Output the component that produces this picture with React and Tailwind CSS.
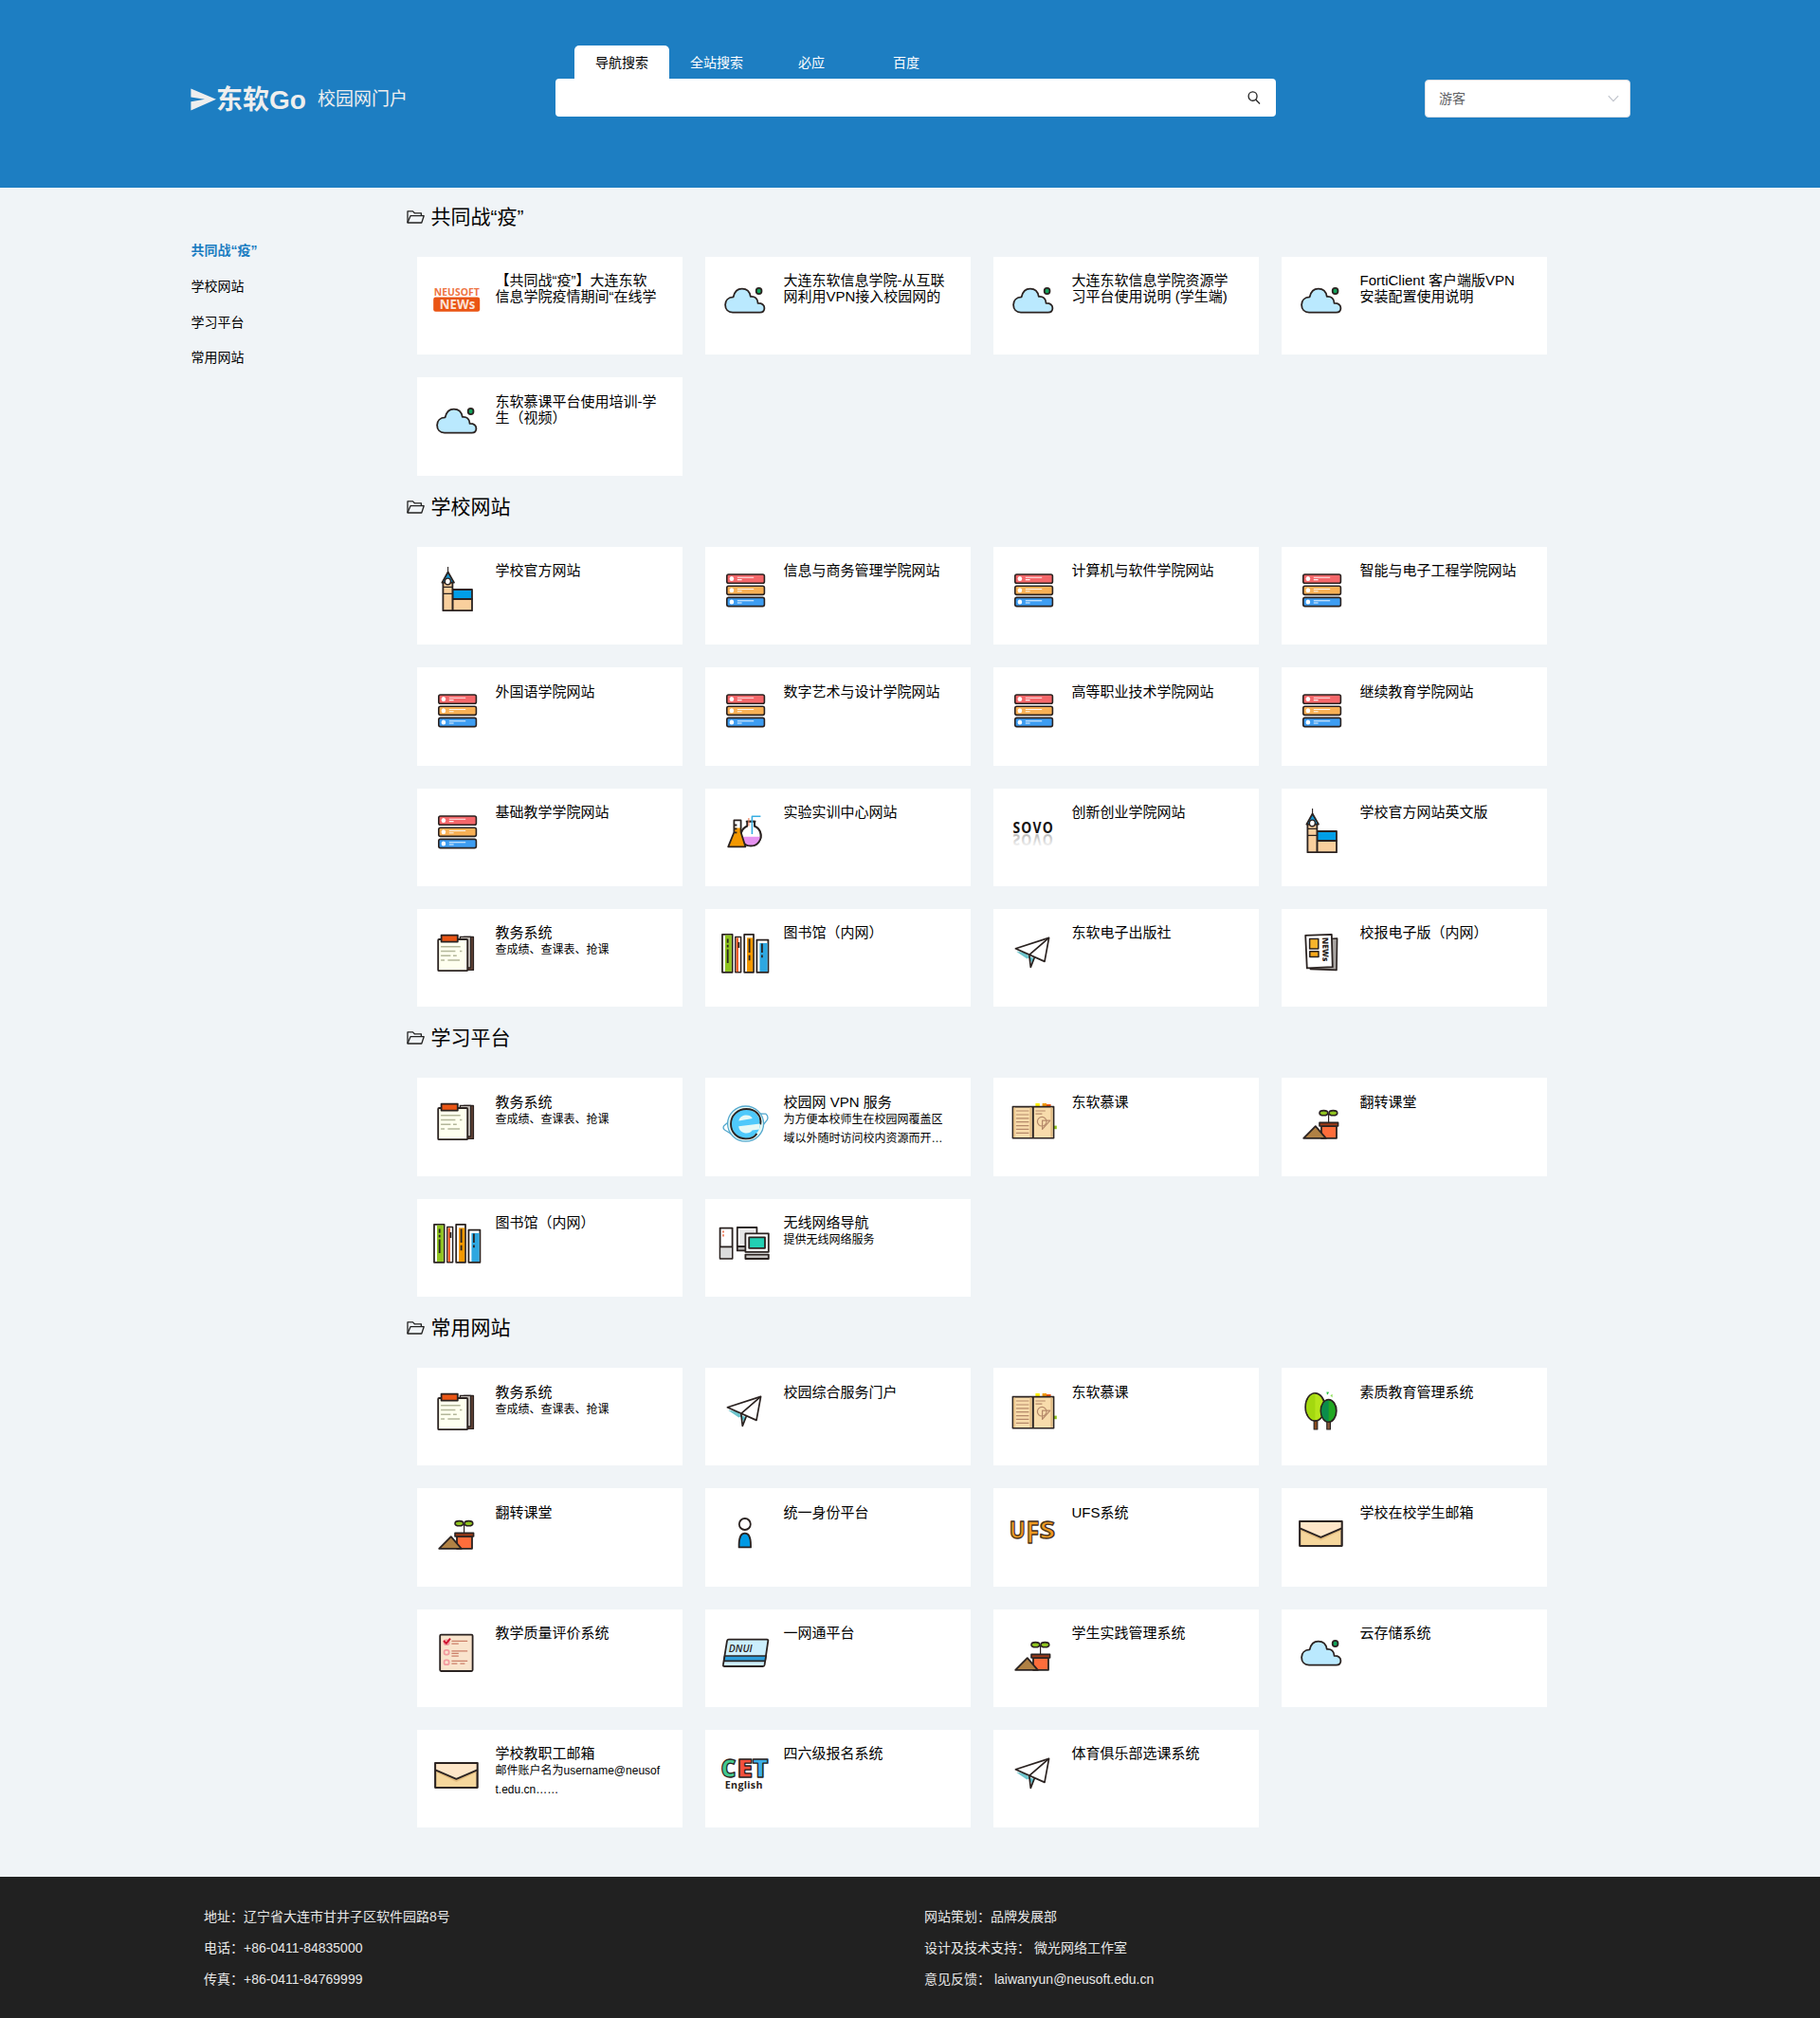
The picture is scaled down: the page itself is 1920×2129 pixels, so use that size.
import React from "react";

const INK = "#2b2321";

/* Every card icon is drawn on the same 64x64 board. */
function Board({ children }) {
  return (
    <svg
      className="block h-16 w-16 shrink-0"
      viewBox="10.6 10 64 64"
      fill="none"
      stroke={INK}
      strokeWidth="1.8"
      strokeLinejoin="round"
    >
      {children}
    </svg>
  );
}

const NewsLogo = () => (
  <Board>
    <g stroke="none" fontFamily="Open Sans, sans-serif">
      <text x="18.4" y="41" fontSize="10.2" fontWeight="700" fill="#ee7443" textLength="48" lengthAdjust="spacingAndGlyphs">NEUSOFT</text>
      <rect x="17.8" y="42.6" width="49" height="15.2" rx="2.4" fill="#ea5514" />
      <text x="24.4" y="55.2" fontSize="13.4" fontWeight="700" fill="#fbe3d8" textLength="37.4" lengthAdjust="spacingAndGlyphs">NEWs</text>
    </g>
  </Board>
);

const Cloud = () => (
  <Board>
    <path
      fill="#bae9fe"
      d="M29.6 58.6C24.5 58.6 21.7 55 21.7 50.6C21.7 46 25 42.6 30.2 42.4C31.4 37 34.6 33.7 39.4 33.7C44.2 33.7 47.6 37 48.4 41.9C53 41.4 56 44 56.2 48.9C60.6 48.8 63 50.8 63 53.9C63 56.8 61 58.6 58.2 58.6Z"
    />
    <ellipse cx="57.2" cy="36" rx="2.9" ry="3.1" fill="#13a35b" />
  </Board>
);

const Servers = () => (
  <Board>
    {[
      [29, "#f5676a"],
      [41.2, "#f8b055"],
      [53.4, "#3d9df2"],
    ].map(([y, fill]) => (
      <g key={y}>
        <rect x="23.4" y={y} width="39.6" height="9.2" rx="1.8" fill={fill} strokeWidth="1.6" />
        <ellipse cx="28.5" cy={y + 4.6} rx="2.3" ry="2.5" fill="#fff" stroke="none" />
        <path d={`M34.4 ${y + 3.3}H51.8M34.4 ${y + 5.6}H39.2`} stroke="#fff" strokeWidth="1.1" opacity=".9" />
      </g>
    ))}
  </Board>
);

const Tower = () => (
  <Board>
    <rect x="38" y="45" width="20.6" height="10" fill="#009ee7" />
    <rect x="38" y="55" width="20.6" height="12.2" fill="#f9cf9d" />
    <rect x="28" y="37" width="10" height="30.2" fill="#f9cf9d" />
    <path d="M28 42.4H38M28 49.4H38" strokeWidth="1.3" />
    <path d="M33.2 26.5L27 37.6H39.6Z" fill="#1597d4" />
    <path d="M33.2 21V27" strokeWidth="1.1" />
    <ellipse cx="33" cy="36.4" rx="3" ry="3.3" fill="#fff" strokeWidth="1.4" />
  </Board>
);

const Flasks = () => (
  <Board>
    <path d="M44.8 39.6A10.6 10.8 0 1 0 52.6 39.6V34.6H44.8Z" fill="#fff" />
    <path d="M39.2 50.7H59.2A10 10.4 0 0 1 39.2 50.7Z" fill="#e592f0" stroke="none" />
    <path d="M44.8 39.6A10.6 10.8 0 1 0 52.6 39.6V34.6M43.4 34.6H54" />
    <path d="M31 33.4H38.2V46L43 61.3H24.8L31 46Z" fill="#fff" stroke="none" />
    <path d="M31 41.5H38.2V46L43 61.3H24.8L31 46Z" fill="#f39800" stroke="none" />
    <path d="M31 33.4H38.2V46L43 61.3H24.8L31 46ZM31 38.5H34M31 42.4H34M31 46.4H34" />
    <path d="M59 29.3H50V48" stroke="#38aee2" strokeWidth="1.6" />
    <path d="M46.5 31V39.6" stroke="#ee7a55" strokeWidth="1.1" />
  </Board>
);

const Sovo = () => (
  <Board>
    <defs>
      <linearGradient id="sovoFade" x1="0" y1="0" x2="0" y2="1">
        <stop offset="0.2" stopColor="#f2f2f2" />
        <stop offset="0.8" stopColor="#b4b4b4" />
      </linearGradient>
    </defs>
    <g stroke="none" fontFamily="Open Sans, sans-serif" fontWeight="700" fontSize="16.2" letterSpacing="1.4">
      <text x="21" y="47.2" fill="#151313" textLength="43.6" lengthAdjust="spacingAndGlyphs">SOVO</text>
      <g transform="translate(0 94.8) scale(1 -1)">
        <text x="21" y="47.2" fill="url(#sovoFade)" textLength="43.6" lengthAdjust="spacingAndGlyphs">SOVO</text>
      </g>
    </g>
  </Board>
);

const Clipboard = () => (
  <Board>
    <path d="M50 29.4H60V64.4H50Z" fill="#6f4a3b" strokeWidth="1.4" />
    <path d="M46 29.4H57.2V62H46Z" fill="#c5bfb9" strokeWidth="1.4" />
    <rect x="22.8" y="32" width="31" height="33.2" rx="1" fill="#feffef" />
    <rect x="26.2" y="27.6" width="17.2" height="7" fill="#ea5514" />
    <path
      stroke="#b3b79a"
      strokeWidth="1.6"
      d="M25.7 39.8H46.3M25.7 44.5H41M45.6 44.5H48M25.7 49.3H36M38.6 49.3H42.4M25.7 54H29.6M33 54H45.6"
    />
  </Board>
);

const Books = () => (
  <Board>
    <rect x="18.6" y="26.8" width="10.6" height="40" fill="#fff" />
    <rect x="21.6" y="27.6" width="6.8" height="38.4" fill="#8fc31f" stroke="none" />
    <rect x="32.4" y="29.6" width="5.8" height="37.2" fill="#fff" strokeWidth="1.5" />
    <rect x="33.2" y="30.4" width="2.4" height="35.8" fill="#f0602a" stroke="none" />
    <rect x="41.8" y="26.8" width="9.8" height="40" fill="#fff" />
    <rect x="44.6" y="30.4" width="6.2" height="35.6" fill="#f39800" stroke="none" />
    <rect x="55" y="32.6" width="12" height="34.2" fill="#fff" />
    <rect x="58" y="36" width="8.2" height="30" fill="#2ea7e0" stroke="none" />
    <path strokeWidth="1.8" d="M24.3 31.6V35.8M24.3 37.7V40.4M24.3 42.6V57M36 35V41M47.2 31.6V46M47.2 48.7V54.3M60.5 36.6V46M60.5 48.6V51.2" />
  </Board>
);

const Plane = () => (
  <Board>
    <path d="M24.4 43.4L43 52L41.8 58L38 51.5Z" fill="#5cbfca" stroke="none" />
    <path d="M25 45L36 52.4L39 51L34 46Z" fill="#6cc4cc" stroke="none" />
    <path d="M24 41.8L59.2 30.4L54.6 55.4Z" fill="#fff" strokeWidth="1.7" />
    <path d="M59.2 30.4L38.4 48.4L39.9 61.4L44 51" strokeWidth="1.7" />
  </Board>
);

const Newspaper = () => (
  <Board>
    <path d="M31 33L59.2 31L58.6 64.4L31 63.4Z" fill="#a9a5a2" strokeWidth="1.6" />
    <path d="M25.8 27.8L53.4 26.8L54.4 61.2L27.4 62.4Z" fill="#fff" />
    <rect x="30.2" y="31.6" width="9.2" height="10.4" fill="#f7b42c" strokeWidth="1.5" />
    <rect x="30.4" y="44.8" width="9.2" height="5.6" fill="#f7a81b" strokeWidth="1.5" />
    <text
      transform="translate(43.6 30) rotate(89)"
      stroke="none"
      fill={INK}
      fontFamily="Open Sans, sans-serif"
      fontWeight="800"
      fontSize="8.6"
      textLength="25.4"
      lengthAdjust="spacingAndGlyphs"
    >
      NEWs
    </text>
  </Board>
);

const Browser = () => (
  <Board>
    <g stroke="#55a9ce" strokeWidth="1.3">
      <path d="M57 38L64.6 38.2Q67.6 40.6 66 44.4L60 52M27 45L20.6 50.4Q18.6 53 21 55L29 60" fill="#fff" />
      <ellipse cx="43.2" cy="48.6" rx="19" ry="18.6" fill="#e6f9f6" />
    </g>
    <ellipse cx="43" cy="48.6" rx="15.6" ry="15.4" fill="#4fc9fb" stroke="none" />
    <path d="M58.8 49.4C60.4 39.5 53.4 33 44 33C34.5 33 27.6 40 27.6 48.8C27.6 58 34.6 64.4 43.4 64.4C49 64.4 53 62.2 55 59" strokeWidth="1.9" />
    <path d="M36 45.4C37 38.8 48 37.6 50.4 43Z" fill="#e6f9f6" stroke="none" />
    <path d="M58.4 48.6L35.8 51.2C36.6 59.4 47.4 60.4 50.2 55.4L57.6 54.4Z" fill="#e6f9f6" stroke="none" />
  </Board>
);

const Computers = () => (
  <Board>
    <rect x="16.2" y="30.6" width="13" height="32.2" fill="#fff" />
    <rect x="17" y="50.6" width="11.4" height="11.6" fill="#dcdcdc" stroke="none" />
    <path d="M16.2 50.4H29.2" />
    <path d="M19.6 33.4V35.6M19.6 37.2V39.4" stroke="#e9552b" strokeWidth="1.4" />
    <rect x="34.4" y="50" width="10" height="4.4" fill="#b5b2b1" />
    <rect x="34.4" y="30" width="20.6" height="20" fill="#fff" />
    <rect x="36.8" y="32.4" width="15.8" height="15" fill="#e6e6e6" stroke="none" />
    <rect x="43" y="36.4" width="24.4" height="19.4" fill="#fff" />
    <rect x="46.8" y="40.4" width="16.8" height="11.4" fill="#22cfb3" />
    <rect x="43" y="58.6" width="24.4" height="4.4" fill="#c8c5c4" />
  </Board>
);

const OpenBook = () => (
  <Board>
    <rect x="45" y="27" width="4.4" height="3" fill="#fff100" stroke="none" />
    <rect x="52.2" y="27" width="4.4" height="3" fill="#f39800" stroke="none" />
    <rect x="56.6" y="28" width="4.6" height="2" fill="#ea5514" stroke="none" />
    <rect x="64.4" y="50.6" width="3" height="3.6" fill="#8fc31f" stroke="none" />
    <rect x="21" y="30.6" width="43.2" height="33.2" fill="#f8dcac" strokeWidth="1.6" />
    <path d="M39.8 31.4V63M61.8 31.4V63M22.6 31.4V63" stroke="#e3bd85" strokeWidth="1.8" />
    <path d="M42.4 30.6V63.8" strokeWidth="2" />
    <g stroke="#b5896a" strokeWidth="1.2">
      <path d="M24.5 35H38M24.5 39H38M24.5 42.8H38M24.5 46.7H38M24.5 50.6H38M24.5 54.4H38M24.5 58.4H38M45 35H55.4M45 38.2H52" />
      <circle cx="51.8" cy="46.2" r="4.8" />
      <path d="M52.2 45.2H60.4L52.2 54.4Z" />
    </g>
  </Board>
);

const Plant = () => (
  <Board>
    <path d="M50.2 47V38" strokeWidth="1.2" />
    <ellipse cx="45" cy="37.2" rx="4.4" ry="2.6" fill="#8fc31f" strokeWidth="1.6" />
    <ellipse cx="55" cy="37.2" rx="4.4" ry="2.6" fill="#8fc31f" strokeWidth="1.6" />
    <path d="M42.6 51H58.6V63.8H42.6Z" fill="#ff6d3b" />
    <rect x="40.6" y="47.4" width="19.6" height="3.6" fill="#9c3a17" strokeWidth="1.6" />
    <path d="M23.8 63.8L36.4 51.2L47.4 63.8Z" fill="#b08144" />
  </Board>
);

const Trees = () => (
  <Board>
    <rect x="34.8" y="55.4" width="3.6" height="9.6" fill="#8a4a1c" strokeWidth="1.2" />
    <rect x="48.4" y="56" width="3.6" height="9" fill="#8a5a3c" strokeWidth="1.2" />
    <ellipse cx="36" cy="41.4" rx="10.2" ry="14.6" fill="#b6e51a" />
    <path d="M36 27.6A9.4 13.8 0 0 0 36 55.2Z" fill="#a3d80f" stroke="none" />
    <ellipse cx="50.2" cy="45.4" rx="8.2" ry="11.8" fill="#22a722" />
    <path d="M50.2 34.4A7.4 11 0 0 0 50.2 56.4Z" fill="#0b8c4b" stroke="none" />
    <path d="M48 25.6L50.8 25.8L48.6 28.8Z" fill="#22c33c" stroke="none" />
    <path d="M52 29.2L54.2 27.8V31.6Z" fill="#8fe05a" stroke="none" />
  </Board>
);

const Person = () => (
  <Board>
    <ellipse cx="42.4" cy="38" rx="6" ry="6" fill="#fff" />
    <path d="M36.2 62.4V60C36.2 52 38.6 47.6 42.4 47.6C46.2 47.6 48.6 52 48.6 60V62.4Z" fill="#0099e4" />
  </Board>
);

const Ufs = () => (
  <Board>
    <g
      fill="#ee9a22"
      stroke="#4a331d"
      strokeWidth="1.3"
      fontFamily="Open Sans, sans-serif"
      fontWeight="700"
    >
      <text x="17.4" y="52.6" fontSize="25.4" textLength="17.2" lengthAdjust="spacingAndGlyphs">U</text>
      <text x="35" y="57.6" fontSize="31.4" textLength="14" lengthAdjust="spacingAndGlyphs">F</text>
      <text x="49" y="52.6" fontSize="25.4" textLength="16.6" lengthAdjust="spacingAndGlyphs">S</text>
    </g>
  </Board>
);

const Envelope = () => (
  <Board>
    <rect x="19.8" y="35" width="44.4" height="25.8" fill="#f6d79c" />
    <path d="M20 44.4L42 55L64 44.4V42H20Z" fill="#e3bd80" stroke="none" />
    <path d="M20 35.4H64V42.4L42 51.8L20 42.4Z" fill="#fee6c8" stroke="none" />
    <path d="M20 42.4L42 51.8L64 42.4" />
    <rect x="19.8" y="35" width="44.4" height="25.8" />
  </Board>
);

const Checklist = () => (
  <Board>
    <rect x="24.8" y="26.6" width="34.4" height="38.4" rx="1.2" fill="#f9e4cd" />
    <g stroke="#f39a9f" strokeWidth="1.8">
      <rect x="29.2" y="32.4" width="5" height="4.6" rx="1.4" />
      <rect x="29.2" y="42.8" width="5" height="4.8" rx="1.8" />
      <rect x="29.2" y="53.4" width="5" height="4.8" rx="1.8" />
    </g>
    <path d="M28.6 33L31.4 35.8L35.6 30.6" stroke="#cf1430" strokeWidth="2" />
    <path
      stroke="#cb7f68"
      strokeWidth="1.3"
      d="M37 33.4H53.8M37 36.2H44.4M37 43.8H53.8M37 46.4H44.4M37 49.2H44.4M37 54.4H53.8M37 57.2H43M46 57.2H51"
    />
  </Board>
);

const CampusCard = () => (
  <Board>
    <path d="M25.4 31.7H65.6Q67.2 31.7 66.9 33.2L63.2 58.4Q62.9 60 61.4 60H21Q19.2 60 19.5 58.4L23.6 33.2Q23.9 31.7 25.4 31.7Z" fill="#cceffd" />
    <path d="M21.2 49H64.6L63.8 54.4H20.4Z" fill="#2b9edc" strokeWidth="1.6" />
    <text x="25.4" y="45.4" stroke="none" fill={INK} fontFamily="Open Sans, sans-serif" fontStyle="italic" fontWeight="600" fontSize="10.8" textLength="24.8" lengthAdjust="spacingAndGlyphs">
      DNUI
    </text>
  </Board>
);

const Cet = () => (
  <Board>
    <g fontFamily="Open Sans, sans-serif" fontWeight="800" fontSize="27" strokeWidth="1.3">
      <text x="17.2" y="50.2" fill="#43c98e" textLength="16" lengthAdjust="spacingAndGlyphs">C</text>
      <text x="34" y="50.2" fill="#f4503d" textLength="16.6" lengthAdjust="spacingAndGlyphs">E</text>
      <text x="50.4" y="50.2" fill="#3bb0ea" textLength="16.8" lengthAdjust="spacingAndGlyphs">T</text>
    </g>
    <text x="21.4" y="62.4" stroke="none" fill={INK} fontFamily="Open Sans, sans-serif" fontWeight="700" fontSize="10.2" letterSpacing="0.3" textLength="40" lengthAdjust="spacingAndGlyphs">
      English
    </text>
  </Board>
);

const sections = [
  {
    title: "共同战“疫”",
    cards: [
      [NewsLogo, ["【共同战“疫”】大连东软", "信息学院疫情期间“在线学"]],
      [Cloud, ["大连东软信息学院-从互联", "网利用VPN接入校园网的"]],
      [Cloud, ["大连东软信息学院资源学", "习平台使用说明 (学生端)"]],
      [Cloud, ["FortiClient 客户端版VPN", "安装配置使用说明"]],
      [Cloud, ["东软慕课平台使用培训-学", "生（视频）"]],
    ],
  },
  {
    title: "学校网站",
    cards: [
      [Tower, ["学校官方网站"]],
      [Servers, ["信息与商务管理学院网站"]],
      [Servers, ["计算机与软件学院网站"]],
      [Servers, ["智能与电子工程学院网站"]],
      [Servers, ["外国语学院网站"]],
      [Servers, ["数字艺术与设计学院网站"]],
      [Servers, ["高等职业技术学院网站"]],
      [Servers, ["继续教育学院网站"]],
      [Servers, ["基础教学学院网站"]],
      [Flasks, ["实验实训中心网站"]],
      [Sovo, ["创新创业学院网站"]],
      [Tower, ["学校官方网站英文版"]],
      [Clipboard, ["教务系统"], ["查成绩、查课表、抢课"]],
      [Books, ["图书馆（内网）"]],
      [Plane, ["东软电子出版社"]],
      [Newspaper, ["校报电子版（内网）"]],
    ],
  },
  {
    title: "学习平台",
    cards: [
      [Clipboard, ["教务系统"], ["查成绩、查课表、抢课"]],
      [Browser, ["校园网 VPN 服务"], ["为方便本校师生在校园网覆盖区", "域以外随时访问校内资源而开…"]],
      [OpenBook, ["东软慕课"]],
      [Plant, ["翻转课堂"]],
      [Books, ["图书馆（内网）"]],
      [Computers, ["无线网络导航"], ["提供无线网络服务"]],
    ],
  },
  {
    title: "常用网站",
    cards: [
      [Clipboard, ["教务系统"], ["查成绩、查课表、抢课"]],
      [Plane, ["校园综合服务门户"]],
      [OpenBook, ["东软慕课"]],
      [Trees, ["素质教育管理系统"]],
      [Plant, ["翻转课堂"]],
      [Person, ["统一身份平台"]],
      [Ufs, ["UFS系统"]],
      [Envelope, ["学校在校学生邮箱"]],
      [Checklist, ["教学质量评价系统"]],
      [CampusCard, ["一网通平台"]],
      [Plant, ["学生实践管理系统"]],
      [Cloud, ["云存储系统"]],
      [Envelope, ["学校教职工邮箱"], ["邮件账户名为username@neusof", "t.edu.cn……"]],
      [Cet, ["四六级报名系统"]],
      [Plane, ["体育俱乐部选课系统"]],
    ],
  },
];

function Card({ icon: Icon, title, desc }) {
  return (
    <a className="flex h-[103.33px] bg-white pl-2.5">
      <div className="pt-2.5">
        <Icon />
      </div>
      <div className="pl-[8.5px] pt-[16.38px] whitespace-nowrap text-black">
        {title.map((line) => (
          <p key={line} className="text-[15px] leading-[17px]">{line}</p>
        ))}
        {desc?.map((line) => (
          <p key={line} className="text-xs leading-5">{line}</p>
        ))}
      </div>
    </a>
  );
}

function FolderIcon() {
  return (
    <svg className="h-3.5 w-[19px]" viewBox="0 0 19 14" fill="none" stroke="#222" strokeWidth="1.3" strokeLinejoin="round">
      <path d="M1 13V0.9H6.5L8.3 2.8H15.4V5.6" />
      <path d="M1 13L4 5.7H18.2L15.8 13Z" />
    </svg>
  );
}

function Section({ title, cards }) {
  return (
    <section>
      <h2 className="flex h-[51.15px] items-start gap-[7px] text-[21px] leading-[18px] text-black">
        <span className="flex h-[18px] items-center">
          <FolderIcon />
        </span>
        {title}
      </h2>
      <div className="mb-6 ml-[11.5px] grid grid-cols-[repeat(4,280px)] gap-6">
        {cards.map(([icon, name, desc], i) => (
          <Card key={i} icon={icon} title={name} desc={desc} />
        ))}
      </div>
    </section>
  );
}

function Header() {
  return (
    <header className="flex h-[198px] items-start bg-[#1d7ec2] pl-[201px]">
      <div className="flex w-[385px] items-center pt-[84px] text-[#eeeeee]">
        <svg className="h-6 w-[27px]" viewBox="0 0 27 24" fill="currentColor">
          <path d="M0.4 0.4L27 11.8L0.4 23.4V14.2L15 11.8L0.4 9.6Z" />
        </svg>
        <span className="pt-0.5 text-[28px] leading-10 font-bold">东软Go</span>
        <span className="pl-3 text-[19px] leading-10 whitespace-nowrap">校园网门户</span>
      </div>
      <div className="w-[760px] pt-12">
        <nav className="flex h-[35px] pl-5 text-sm leading-9 text-white">
          <span className="w-[100px] rounded-t-[5px] bg-white text-center text-black">导航搜索</span>
          <span className="w-[100px] text-center">全站搜索</span>
          <span className="w-[100px] text-center">必应</span>
          <span className="w-[100px] text-center">百度</span>
        </nav>
        <div className="flex h-10 items-center justify-end rounded bg-white pr-4">
          <svg className="h-3.5 w-3.5" viewBox="0 0 15 15" fill="none" stroke="#222" strokeWidth="1.4">
            <ellipse cx="6" cy="6" rx="4.8" ry="5" />
            <path d="M9.2 9.6L14 14.4" />
          </svg>
        </div>
      </div>
      <div className="mt-[84px] ml-[157px] flex h-10 w-[217px] items-center justify-between rounded border border-[#dcdfe6] bg-white pr-[11px] pl-3.5 text-sm text-[#606266]">
        <span>游客</span>
        <svg className="h-3 w-3" viewBox="0 0 12 12" fill="none" stroke="#c0c4cc" strokeWidth="1.2">
          <path d="M0.8 3.2L6 8.6L11.2 3.2" />
        </svg>
      </div>
    </header>
  );
}

export default function App() {
  return (
    <div className="min-h-[2129px] w-[1920px] bg-[#f0f4f7] font-['Liberation_Sans','Noto_Sans_CJK_SC',sans-serif]">
      <Header />
      <div className="flex h-[1782px]">
        <aside className="w-[428.5px] pt-[48.4px] pl-[201.5px] text-sm leading-[37.67px] text-black">
          <p className="font-bold text-[#1d7ec2]">共同战“疫”</p>
          <p>学校网站</p>
          <p>学习平台</p>
          <p>常用网站</p>
        </aside>
        <main className="pt-[21.95px]">
          {sections.map((s) => (
            <Section key={s.title} title={s.title} cards={s.cards} />
          ))}
        </main>
      </div>
      <footer className="flex h-[149px] bg-[#212121] pt-[25.5px] pl-[215px] text-sm leading-[33px] whitespace-pre text-[#e8e8e8]">
        <div className="w-[760px]">
          <p>地址：辽宁省大连市甘井子区软件园路8号</p>
          <p>电话：+86-0411-84835000</p>
          <p>传真：+86-0411-84769999</p>
        </div>
        <div>
          <p>网站策划：品牌发展部</p>
          <p>设计及技术支持： 微光网络工作室</p>
          <p>意见反馈： laiwanyun@neusoft.edu.cn</p>
        </div>
      </footer>
    </div>
  );
}
